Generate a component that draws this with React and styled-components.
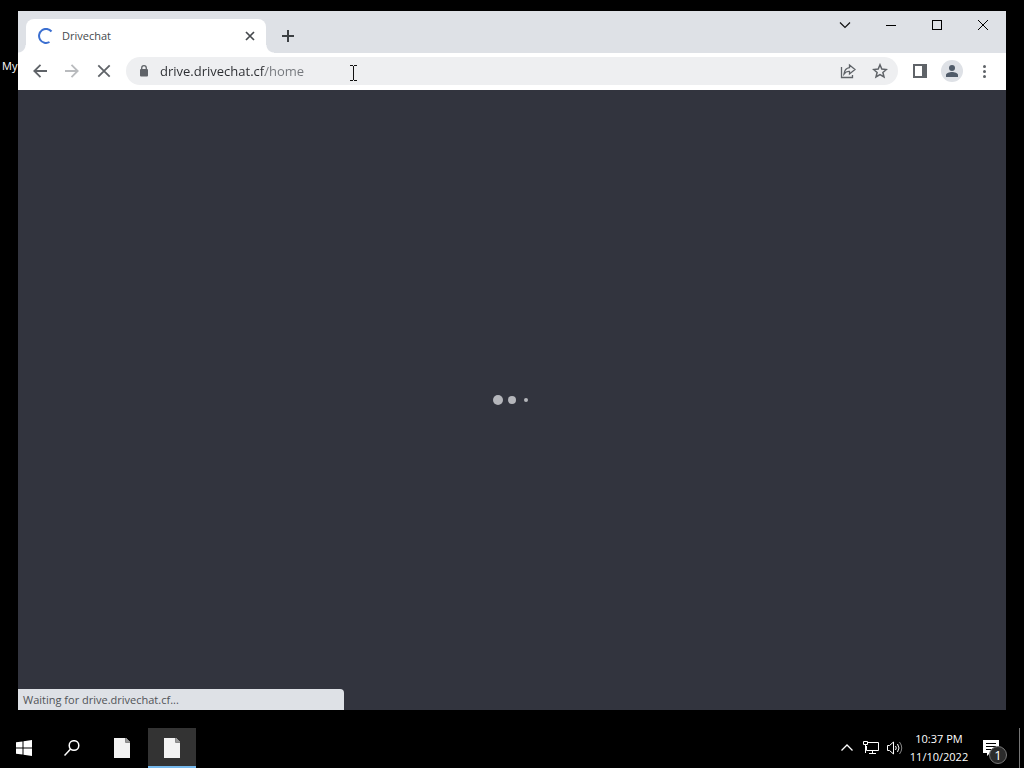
import React, { useState } from "react";
import styled, { createGlobalStyle } from "styled-components";

const GlobalStyle = createGlobalStyle`
  *, *::before, *::after { box-sizing: border-box; }
  body {
    margin: 0;
    background: #000;
    font-family: "Open Sans", "Noto Sans", sans-serif;
    font-size: 11px;
    line-height: 18px;
  }
  button, input { font: inherit; }
`;

const Screen = styled.div`
  display: flex;
  flex-direction: column;
  min-height: 100vh;
  background: #000;
`;

const Desktop = styled.main`
  position: relative;
  display: flex;
  flex: 1;
  padding: 11px 18px 18px;
`;

const DesktopLabel = styled.span`
  position: absolute;
  top: 57px;
  left: 2px;
  color: #fff;
`;

const BrowserWindow = styled.section`
  position: relative;
  display: flex;
  flex: 1;
  flex-direction: column;
  background: #32343e;
`;

const TitleBar = styled.header`
  display: flex;
  align-items: flex-end;
  height: 42px;
  padding-left: 8px;
  background: #dee1e6;
`;

const Tab = styled.div`
  position: relative;
  display: flex;
  align-items: center;
  gap: 8px;
  width: 240px;
  height: 34px;
  padding: 0 8px 0 12px;
  border-radius: 8px 8px 0 0;
  background: #fff;
  color: #45494d;

  &::before, &::after {
    content: "";
    position: absolute;
    bottom: 0;
    width: 8px;
    height: 8px;
  }
  &::before {
    right: 100%;
    background: radial-gradient(circle at 0 0, #dee1e6 7px, #fff 8px);
  }
  &::after {
    left: 100%;
    background: radial-gradient(circle at 100% 0, #dee1e6 7px, #fff 8px);
  }
`;

const TabTitle = styled.span`
  flex: 1;
`;

const PlainButton = styled.button`
  display: flex;
  flex: none;
  align-items: center;
  justify-content: center;
  padding: 0;
  border: 0;
  background: transparent;
  color: ${(p) => p.$color || "#5f6368"};
`;

const TabClose = styled(PlainButton)`
  width: 16px;
  height: 16px;
`;

const IconButton = styled(PlainButton)`
  width: 28px;
  height: 28px;
  border-radius: 50%;
`;

const NewTab = styled(IconButton)`
  margin: 0 0 3px 8px;
`;

const WindowControls = styled.div`
  display: flex;
  align-self: flex-start;
  margin-left: auto;
`;

const WindowButton = styled(PlainButton)`
  width: 46px;
  height: 28px;
`;

const Toolbar = styled.div`
  display: flex;
  align-items: center;
  gap: 4px;
  height: 37px;
  padding: 0 8px 1px;
  background: #fff;
`;

const AddressBar = styled.form`
  position: relative;
  display: flex;
  flex: 1;
  align-items: center;
  gap: 4px;
  height: 28px;
  margin: 0 4px;
  padding: 0 4px 0 10px;
  border-radius: 14px;
  background: #eeeff1;
`;

const AddressInput = styled.input`
  flex: 1;
  min-width: 0;
  height: 20px;
  margin-left: 4px;
  padding: 0;
  border: 0;
  outline: 0;
  color: #2b2d31;
  font-size: 13px;
  line-height: 20px;
  background: linear-gradient(to right, #2b2d31 105px, #74777c 105px);
  background-clip: text;
  -webkit-text-fill-color: transparent;
`;

const Pointer = styled.svg`
  position: absolute;
  top: 8px;
  left: 223px;
`;

const Avatar = styled.span`
  display: flex;
  align-items: center;
  justify-content: center;
  width: 22px;
  height: 22px;
  border-radius: 50%;
  background: #dee1e6;
`;

const Page = styled.div`
  display: flex;
  flex: 1;
  align-items: center;
  justify-content: center;
`;

const Dots = styled.div`
  display: flex;
  align-items: center;
  gap: 4px;
`;

const DotCell = styled.span`
  display: flex;
  align-items: center;
  justify-content: center;
  width: 10px;
  height: 10px;

  &::before {
    content: "";
    width: ${(p) => p.$size}px;
    height: ${(p) => p.$size}px;
    border-radius: 50%;
    background: #b5b6bb;
  }
`;

const StatusBubble = styled.div`
  position: absolute;
  bottom: 0;
  left: 0;
  width: 33%;
  height: 21px;
  padding: 2px 5px;
  border-radius: 0 4px 0 0;
  background: #dee1e6;
  color: #505357;
`;

const Taskbar = styled.footer`
  display: flex;
  height: 40px;
  background: #000;
  color: #fff;
`;

const TaskApps = styled.nav`
  display: flex;
`;

const TaskButton = styled(PlainButton)`
  width: 48px;
  height: 40px;
  margin-left: ${(p) => (p.$app ? 2 : 0)}px;
  border-bottom: 2px solid ${(p) => (p.$active ? "#76b9ed" : "transparent")};
  border-top: 2px solid ${(p) => (p.$active ? "#333" : "transparent")};
  background: ${(p) => (p.$active ? "#333" : "transparent")};
`;

const Tray = styled.div`
  display: flex;
  margin-left: auto;
`;

const TrayButton = styled(PlainButton)`
  width: ${(p) => p.$width || 24}px;
  height: 40px;
`;

const Clock = styled(TrayButton)`
  flex-direction: column;
  line-height: 18px;
`;

const NoticeButton = styled(TrayButton)`
  position: relative;
`;

const Badge = styled.span`
  position: absolute;
  right: 4px;
  bottom: 4px;
  width: 18px;
  height: 18px;
  border: 1px solid #777;
  border-radius: 50%;
  background: #2b2b2b;
  font-size: 13px;
  line-height: 16px;
`;

const ShowDesktop = styled(PlainButton)`
  width: 5px;
  height: 40px;
  margin-left: 8px;
  border-left: 1px solid #777;
`;

function Icon({ size = 16, width, height, sw = 1, children, ...rest }) {
  const w = width || size;
  const h = height || size;
  return (
    <svg width={w} height={h} viewBox={`0 0 ${w} ${h}`} fill="none"
      stroke="currentColor" strokeWidth={sw} aria-hidden="true" {...rest}>
      {children}
    </svg>
  );
}

function FileIcon() {
  return (
    <Icon width={16} height={22} stroke="none">
      <path d="M0 1h12l4 4v16H0z" fill="#f3f3f3" />
      <path d="M12 1v4h4z" fill="#999" />
      <path d="M11.500 1v4.500H16" stroke="#888" fill="none" />
    </Icon>
  );
}

export default function App() {
  const [url, setUrl] = useState("drive.drivechat.cf/home");
  return (
    <Screen>
      <GlobalStyle />
      <Desktop>
        <DesktopLabel>My</DesktopLabel>
        <BrowserWindow>
          <TitleBar>
            <Tab>
              <Icon sw={2} stroke="#3b6fd0">
                <path d="M13.500 3.500A7 7 0 1 0 11.500 14" />
              </Icon>
              <TabTitle>Drivechat</TabTitle>
              <TabClose aria-label="Close tab" $color="#45494d">
                <Icon sw={1.7}><path d="M4 4l8 8M12 4l-8 8" /></Icon>
              </TabClose>
            </Tab>
            <NewTab aria-label="New tab" $color="#3c4043">
              <Icon sw={2}><path d="M8 2v12M2 8h12" /></Icon>
            </NewTab>
            <WindowControls>
              <WindowButton aria-label="Search tabs" $color="#111">
                <Icon sw={1.2}><path d="M3 5.500l5 5 5-5" /></Icon>
              </WindowButton>
              <WindowButton aria-label="Minimize" $color="#000">
                <Icon shapeRendering="crispEdges"><path d="M3 8.500h10" /></Icon>
              </WindowButton>
              <WindowButton aria-label="Maximize" $color="#000">
                <Icon shapeRendering="crispEdges"><path d="M3.500 3.500h9v9h-9z" /></Icon>
              </WindowButton>
              <WindowButton aria-label="Close" $color="#000">
                <Icon><path d="M3 3l10 10M13 3L3 13" /></Icon>
              </WindowButton>
            </WindowControls>
          </TitleBar>
          <Toolbar>
            <IconButton aria-label="Back">
              <Icon sw={1.8}><path d="M15 8H2.500M8.500 1.800L2.300 8l6.200 6.200" /></Icon>
            </IconButton>
            <IconButton aria-label="Forward" $color="#b9bbbe">
              <Icon sw={1.8}><path d="M1 8h12.500M7.500 1.800L13.700 8l-6.200 6.200" /></Icon>
            </IconButton>
            <IconButton aria-label="Stop loading">
              <Icon sw={1.8}><path d="M2.300 2.300l11.400 11.400M13.700 2.300L2.300 13.700" /></Icon>
            </IconButton>
            <AddressBar onSubmit={(e) => e.preventDefault()}>
              <Icon stroke="none" color="#5f6368">
                <path d="M5 6h6a1 1 0 0 1 1 1v5.500a1 1 0 0 1-1 1H5a1 1 0 0 1-1-1V7a1 1 0 0 1 1-1z" fill="currentColor" />
                <path d="M5.700 6.500V5a2.300 2.300 0 0 1 4.600 0v1.500" stroke="currentColor" strokeWidth="1.300" />
              </Icon>
              <AddressInput aria-label="Address" value={url} onChange={(e) => setUrl(e.target.value)} spellCheck={false} />
              <IconButton type="button" aria-label="Share this page">
                <Icon>
                  <path d="M1.500 4v10.500h11V12" strokeWidth="1.300" />
                  <path d="M9.500 2l5.500 4.500-5.500 4.500V8.500C7.500 8.300 5.500 9 4 11c.4-3.500 2.500-6 5.500-6.400z" strokeWidth="1.300" />
                </Icon>
              </IconButton>
              <IconButton type="button" aria-label="Bookmark this tab">
                <Icon sw={1.5}>
                  <path d="M8 1.800l1.800 4.300 4.600.4-3.500 3 1.100 4.500L8 11.600 4 14l1.100-4.500-3.500-3 4.600-.4z" />
                </Icon>
              </IconButton>
              <Pointer width="8" height="17" viewBox="0 0 8 17" fill="none" stroke="#111" shapeRendering="crispEdges" aria-hidden="true">
                <path d="M1 .5h3M5 .5h3M1 15.500h3M5 15.500h3M4.500 1v14" />
              </Pointer>
            </AddressBar>
            <IconButton aria-label="Side panel">
              <Icon stroke="none">
                <path d="M1 1h14v14H1zM3 3v10h7V3z" fill="currentColor" fillRule="evenodd" />
              </Icon>
            </IconButton>
            <IconButton aria-label="Profile">
              <Avatar>
                <Icon stroke="none">
                  <circle cx="8" cy="5" r="3" fill="#505b69" />
                  <path d="M2 14v-2c0-2 3.500-3 6-3s6 1 6 3v2z" fill="#505b69" />
                </Icon>
              </Avatar>
            </IconButton>
            <IconButton aria-label="Menu">
              <Icon stroke="none">
                <g fill="currentColor">
                  <circle cx="8.500" cy="3.500" r="1.500" />
                  <circle cx="8.500" cy="8.500" r="1.500" />
                  <circle cx="8.500" cy="13.500" r="1.500" />
                </g>
              </Icon>
            </IconButton>
          </Toolbar>
          <Page>
            <Dots role="status" aria-label="Loading">
              <DotCell $size={10} />
              <DotCell $size={8} />
              <DotCell $size={4} />
            </Dots>
          </Page>
          <StatusBubble>Waiting for drive.drivechat.cf...</StatusBubble>
        </BrowserWindow>
      </Desktop>
      <Taskbar>
        <TaskApps>
          <TaskButton aria-label="Start">
            <Icon stroke="none">
              <path d="M0 2.300l6.500-.9v6.100H0zM7.500 1.200L16 0v7.500H7.500zM0 8.500h6.500v6.100L0 13.700zM7.500 8.500H16V16l-8.500-1.200z" fill="#fff" />
            </Icon>
          </TaskButton>
          <TaskButton aria-label="Search" $color="#fff">
            <Icon sw={1.5}><circle cx="10" cy="5.500" r="4.800" /><path d="M6.600 9L.5 15.500" /></Icon>
          </TaskButton>
          <TaskButton aria-label="Document" $app><FileIcon /></TaskButton>
          <TaskButton aria-label="Open document" $app $active><FileIcon /></TaskButton>
        </TaskApps>
        <Tray>
          <TrayButton aria-label="Hidden icons" $color="#fff">
            <Icon sw={1.3}><path d="M2.500 10.500L8 5l5.500 5.500" /></Icon>
          </TrayButton>
          <TrayButton aria-label="Network" $color="#fff">
            <Icon>
              <path d="M5 2.500h10.500v8H3.500V6M9.500 10.500v3M6 13.500h7" />
              <path d="M.5 1.500h4v3h-4zM2.500 5v8" />
            </Icon>
          </TrayButton>
          <TrayButton aria-label="Volume" $color="#fff">
            <Icon>
              <path d="M.5 5.500h2l4-3.500v12l-4-3.500h-2z" />
              <path d="M8.500 6q1.500 2 0 4M10.500 4q3 4 0 8" />
              <path d="M12.500 2q4.500 6 0 12" stroke="#888" />
            </Icon>
          </TrayButton>
          <Clock $width={64} $color="#fff">
            <span>10:37 PM</span>
            <span>11/10/2022</span>
          </Clock>
          <NoticeButton aria-label="Notifications, 1 new" $width={40} $color="#fff">
            <Icon stroke="none">
              <path d="M0 0h16v13H7l-3 3v-3H0z" fill="#fff" />
              <path d="M3 3.500h10M3 6.500h10M3 9.500h7" stroke="#000" />
            </Icon>
            <Badge>1</Badge>
          </NoticeButton>
          <ShowDesktop aria-label="Show desktop" />
        </Tray>
      </Taskbar>
    </Screen>
  );
}
